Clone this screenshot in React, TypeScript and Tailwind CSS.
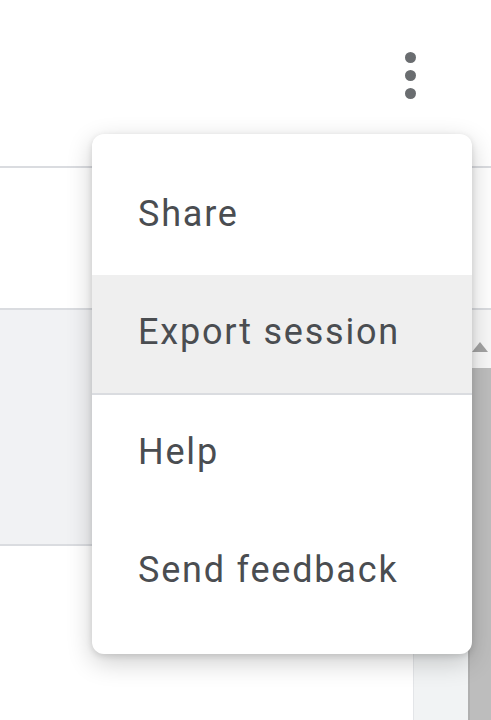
import React from 'react'

// Menú de opciones abierto sobre la página (vista ampliada)
const items = [
  { label: 'Share', active: false, divider: false },
  { label: 'Export session', active: true, divider: true },
  { label: 'Help', active: false, divider: false },
  { label: 'Send feedback', active: false, divider: false },
]

function Kebab() {
  return (
    <button className="flex flex-col items-center gap-[7px] pt-[52px] pr-[75px]">
      <span className="w-[11px] h-[11px] rounded-full bg-[#6a6d70]" />
      <span className="w-[11px] h-[11px] rounded-full bg-[#6a6d70]" />
      <span className="w-[11px] h-[11px] rounded-full bg-[#6a6d70]" />
    </button>
  )
}

function Menu() {
  return (
    <div className="absolute left-[92px] top-[134px] w-[380px] py-[23px] bg-white rounded-[12px] shadow-[0_8px_26px_rgba(0,0,0,0.2),0_2px_6px_rgba(0,0,0,0.12)]">
      {items.map((it) => (
        <div key={it.label}>
          <div
            className={`h-[118px] flex items-center pl-[46px] text-[36px] tracking-[1.8px] text-[#4a4d51] ${it.active ? 'bg-[#efefef]' : ''}`}
          >
            <span className="-mt-[4px]">{it.label}</span>
          </div>
          {it.divider && <div className="h-[2px] bg-[#dadce0]" />}
        </div>
      ))}
    </div>
  )
}

export default function App() {
  return (
    <div className="relative w-[491px] h-[720px] overflow-hidden bg-white font-['Roboto',sans-serif] flex flex-col">
      {/* cabecera con el botón de opciones */}
      <div className="h-[168px] shrink-0 flex justify-end border-b-2 border-[#dadce0]">
        <Kebab />
      </div>

      <div className="h-[142px] shrink-0 border-b-2 border-[#dadce0]" />

      <div className="flex-1 flex min-h-0">
        <div className="flex-1 flex flex-col">
          <div className="h-[236px] shrink-0 bg-[#f1f2f4] border-b-2 border-[#dadce0]" />
          <div className="flex-1 flex">
            <div className="flex-1" />
            <div className="w-[55px] bg-[#f1f3f4] border-l border-[#e3e5e8]" />
          </div>
        </div>

        {/* barra de desplazamiento */}
        <div className="w-[23px] shrink-0 flex flex-col bg-[#f8f8f8]">
          <div className="h-[44px] flex items-end justify-center pb-[2px]">
            <svg width="16" height="10" viewBox="0 0 16 10">
              <path d="M8 0 L16 10 L0 10 Z" fill="#a3a3a3" />
            </svg>
          </div>
          <div className="flex-1 mt-[14px] bg-[#bdbdbd] border-l-2 border-[#b0b0b0]" />
        </div>
      </div>

      <Menu />
    </div>
  )
}
